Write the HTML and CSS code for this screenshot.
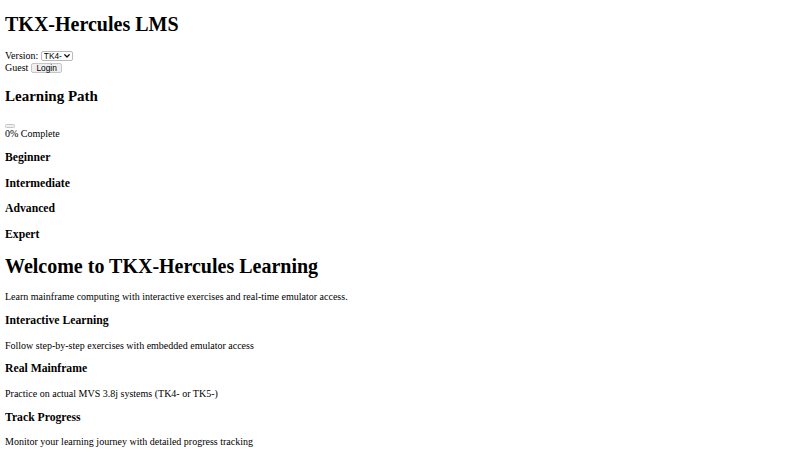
FILE: index.html
```html
<!DOCTYPE html>
<html lang="en">
<head>
<meta charset="utf-8">
<title>TKX-Hercules LMS</title>
<link rel="stylesheet" href="styles.css">
</head>
<body class="page">
<header class="site-header">
  <h1 class="title">TKX-Hercules LMS</h1>
  <div class="control-line">Version: <span class="select-wrap"><select class="control select"><option>TK4-</option><option>TK5-</option></select><svg class="chevron" width="6" height="4" viewBox="0 0 6 4" aria-hidden="true"><path d="M0.8 0.8 L3 3 L5.2 0.8" fill="none" stroke="#111" stroke-width="1.3" stroke-linecap="round" stroke-linejoin="round"/></svg></span></div>
  <div class="control-line">Guest <button class="control button">Login</button></div>
</header>
<aside class="sidebar">
  <h2 class="sidebar-title">Learning Path</h2>
  <div class="line"><span class="progress-bar"></span></div>
  <div class="line">0% Complete</div>
  <h3 class="level">Beginner</h3>
  <h3 class="level">Intermediate</h3>
  <h3 class="level">Advanced</h3>
  <h3 class="level">Expert</h3>
</aside>
<main class="content">
  <h1 class="title">Welcome to TKX-Hercules Learning</h1>
  <p class="text">Learn mainframe computing with interactive exercises and real-time emulator access.</p>
  <div class="feature">
    <h3 class="level">Interactive Learning</h3>
    <p class="text">Follow step-by-step exercises with embedded emulator access</p>
  </div>
  <div class="feature">
    <h3 class="level">Real Mainframe</h3>
    <p class="text">Practice on actual MVS 3.8j systems (TK4- or TK5-)</p>
  </div>
  <div class="feature">
    <h3 class="level">Track Progress</h3>
    <p class="text">Monitor your learning journey with detailed progress tracking</p>
  </div>
</main>
</body>
</html>
```

FILE: styles.css
```css
html {
  background: #ffffff;
}

.page {
  margin: 0 5px 5px;
  font-family: "Liberation Serif", "Times New Roman", serif;
  font-size: 10px;
  line-height: 11.25px;
  color: #000000;
}

.title {
  font-size: 20px;
  line-height: 23.125px;
  font-weight: bold;
  margin: 13.4px 0;
}

.sidebar-title {
  font-size: 15px;
  line-height: 16.875px;
  font-weight: bold;
  margin: 13.6px 0 12.45px;
}

.level {
  font-size: 11.7px;
  line-height: 13.75px;
  font-weight: bold;
  margin: 11.7px 0;
}

.text {
  margin: 10px 0;
}

.line {
  line-height: 11.25px;
}

.control-line {
  line-height: 12.1px;
}

.control {
  font-family: "Liberation Sans", Arial, sans-serif;
  font-size: 8.33px;
  color: #000000;
  box-sizing: border-box;
  height: 10.6px;
  margin: 0;
  vertical-align: baseline;
}

.select-wrap {
  position: relative;
  display: inline-block;
}

.select {
  appearance: none;
  -webkit-appearance: none;
  width: 31.7px;
  padding: 0 8px 0 2px;
  border: 1px solid #b9b9b9;
  border-radius: 2px;
  background: #ffffff;
  line-height: 8px;
}

.chevron {
  position: absolute;
  right: 3px;
  top: 4px;
  pointer-events: none;
}

.button {
  padding: 0 4.6px;
  border: 1px solid #c6c6c6;
  border-radius: 2px;
  background: #efefef;
  line-height: 8px;
}

.progress-bar {
  display: inline-block;
  box-sizing: border-box;
  width: 10px;
  height: 3.75px;
  border: 1px solid #c6c6c6;
  border-radius: 1.5px;
  background: #efefef;
  vertical-align: -1.8px;
}
```
